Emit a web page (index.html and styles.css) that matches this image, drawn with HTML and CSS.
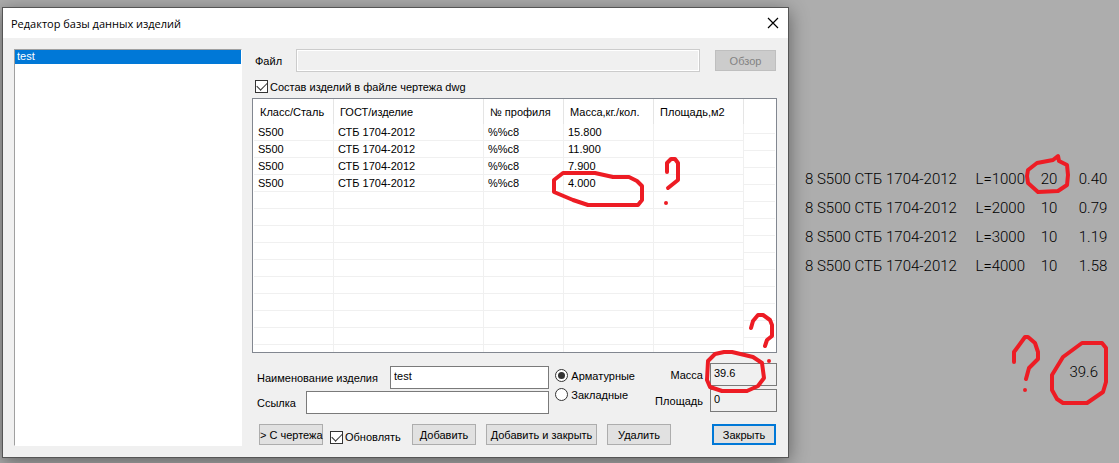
FILE: index.html
```html
<!DOCTYPE html>
<html lang="ru">

<head>
    <meta charset="UTF-8">
    <meta name="viewport" content="width=device-width, initial-scale=1.0">
    <title>Редактор базы данных изделий</title>
    <link rel="stylesheet" href="styles.css">
</head>

<body>
    <form class="dialog">
        <header class="titlebar">
            <h1>Редактор базы данных изделий</h1>
            <button type="button" class="close" aria-label="Закрыть окно">
                <svg width="12" height="12" viewBox="0 0 12 12">
                    <path d="M1 1L11 11M11 1L1 11" stroke="#000" stroke-width="1.2" fill="none" />
                </svg>
            </button>
        </header>

        <div class="content">
            <select class="list" size="20" aria-label="Изделия">
                <option>test</option>
            </select>

            <div class="editor">
                <div class="file-row">
                    <label for="file">Файл</label>
                    <input type="text" id="file" disabled>
                    <button type="button" class="btn" disabled>Обзор</button>
                </div>

                <div class="check-row">
                    <input type="checkbox" id="dwg" checked>
                    <label for="dwg">Состав изделий в файле чертежа dwg</label>
                </div>

                <div class="grid">
                    <table>
                        <colgroup>
                            <col class="c-class">
                            <col class="c-gost">
                            <col class="c-num">
                            <col class="c-mass">
                            <col class="c-area">
                            <col>
                        </colgroup>
                        <thead>
                            <tr><th>Класс/Сталь</th><th>ГОСТ/изделие</th><th>№ профиля</th><th>Масса,кг./кол.</th><th>Площадь,м2</th><th></th></tr>
                        </thead>
                        <tbody>
                            <tr><td>S500</td><td>СТБ 1704-2012</td><td>%%c8</td><td>15.800</td><td></td><td></td></tr>
                            <tr><td>S500</td><td>СТБ 1704-2012</td><td>%%c8</td><td>11.900</td><td></td><td></td></tr>
                            <tr><td>S500</td><td>СТБ 1704-2012</td><td>%%c8</td><td>7.900</td><td></td><td></td></tr>
                            <tr><td>S500</td><td>СТБ 1704-2012</td><td>%%c8</td><td>4.000</td><td></td><td></td></tr>
                            <tr><td></td><td></td><td></td><td></td><td></td><td></td></tr>
                            <tr><td></td><td></td><td></td><td></td><td></td><td></td></tr>
                            <tr><td></td><td></td><td></td><td></td><td></td><td></td></tr>
                            <tr><td></td><td></td><td></td><td></td><td></td><td></td></tr>
                            <tr><td></td><td></td><td></td><td></td><td></td><td></td></tr>
                            <tr><td></td><td></td><td></td><td></td><td></td><td></td></tr>
                            <tr><td></td><td></td><td></td><td></td><td></td><td></td></tr>
                            <tr><td></td><td></td><td></td><td></td><td></td><td></td></tr>
                            <tr><td></td><td></td><td></td><td></td><td></td><td></td></tr>
                            <tr class="last"><td></td><td></td><td></td><td></td><td></td><td></td></tr>
                        </tbody>
                    </table>
                </div>

                <div class="details">
                    <div class="names">
                        <div class="field">
                            <label for="name">Наименование изделия</label>
                            <input type="text" id="name" value="test">
                        </div>
                        <div class="field">
                            <label for="link" class="link-label">Ссылка</label>
                            <input type="text" id="link">
                        </div>
                    </div>
                    <div class="kinds">
                        <div class="kind">
                            <input type="radio" name="kind" id="arm" checked>
                            <label for="arm">Арматурные</label>
                        </div>
                        <div class="kind">
                            <input type="radio" name="kind" id="zak">
                            <label for="zak">Закладные</label>
                        </div>
                    </div>
                    <div class="totals">
                        <label for="mass">Масса</label>
                        <input type="text" id="mass" value="39.6" readonly>
                        <label for="area">Площадь</label>
                        <input type="text" id="area" value="0" readonly>
                    </div>
                </div>

                <div class="buttons">
                    <button type="button" class="btn">&gt; С чертежа</button>
                    <div class="update">
                        <input type="checkbox" id="update" checked>
                        <label for="update">Обновлять</label>
                    </div>
                    <button type="button" class="btn">Добавить</button>
                    <button type="button" class="btn wide">Добавить и закрыть</button>
                    <button type="button" class="btn">Удалить</button>
                    <button type="button" class="btn default">Закрыть</button>
                </div>
            </div>
        </div>
    </form>

    <section class="drawing">
        <table>
            <tr><td>8 S500 СТБ 1704-2012</td><td>L=1000</td><td>20</td><td>0.40</td></tr>
            <tr><td>8 S500 СТБ 1704-2012</td><td>L=2000</td><td>10</td><td>0.79</td></tr>
            <tr><td>8 S500 СТБ 1704-2012</td><td>L=3000</td><td>10</td><td>1.19</td></tr>
            <tr><td>8 S500 СТБ 1704-2012</td><td>L=4000</td><td>10</td><td>1.58</td></tr>
        </table>
        <p class="sum">39.6</p>
    </section>

    <!-- red pencil marks -->
    <svg class="marks" width="1119" height="463" viewBox="0 0 1119 463" aria-hidden="true">
        <path d="M563 173L595 173L613 177L629 177L637 181L642 186V200L638 205H588L573 200L554 192V180Z" />
        <path d="M667 172V163L671 159H675L678 163V180L668 188M666 203V203" />
        <path d="M751 328L753 321L758 315H763L770 320L772 325V336L767 340L765 346M769 361V361" />
        <path d="M708 361L715 354L724 352H732L753 357L762 363L764 378L758 386L747 391H722L710 387L707 380Z" />
        <path d="M1028 170L1037 163L1053 160L1058 156L1059 161L1067 165L1068 175L1067 185L1058 191L1038 192L1028 183L1027 176Z" />
        <path d="M1014 362V352L1025 337H1028L1035 343L1038 352V359L1029 368L1026 379M1025 390V390" />
        <path d="M1052 375L1063 357L1082 343H1102L1106 348V382L1103 392L1087 403H1063L1057 399L1052 390Z" />
    </svg>
</body>

</html>
```

FILE: styles.css
```css
* {
    box-sizing: border-box;
}

body {
    display: flex;
    align-items: flex-start;
    min-height: 100vh;
    margin: 0;
    padding: 7px 0 5px 2px;
    font-family: "Liberation Sans", Arial, sans-serif;
    font-size: 11px;
    color: #000;
    background: #adadad;
}

input,
button,
select {
    font: inherit;
    color: inherit;
    margin: 0;
}

.dialog {
    flex: 1;
    min-width: 700px;
    border: 1px solid #555;
    background: #f0f0f0;
    box-shadow: 0 4px 18px rgba(0, 0, 0, 0.45);
}

.titlebar {
    display: flex;
    align-items: center;
    justify-content: space-between;
    height: 30px;
    padding: 0 9px 0 8px;
    background: #fff;
}

.titlebar h1 {
    margin: 0;
    font: 11px "Open Sans", sans-serif;
}

.close {
    display: flex;
    padding: 0;
    border: none;
    background: none;
}

.content {
    display: flex;
    gap: 10px;
    padding: 11px;
}

.list {
    width: 228px;
    padding: 0;
    border: 1px solid #fff;
    border-top-color: #a0a0a0;
    border-left-color: #a0a0a0;
    border-radius: 0;
    background: #fff;
    outline: none;
    overflow: hidden;
}

.list option {
    height: 14px;
    min-height: 14px;
    padding: 0 2px;
    line-height: 15px;
    color: #fff;
    background: #0078d7;
}

.editor {
    flex: 1;
}

/* text boxes, ticks and radios */
input[type="text"] {
    height: 23px;
    min-width: 0;
    padding: 0 3px 4px;
    border: 1px solid #7a7a7a;
    border-radius: 0;
    background: #fff;
    outline: none;
}

input[type="text"]:disabled {
    border-color: #ccc;
    background: #f0f0f0;
    box-shadow: inset 0 0 0 1px #fff;
}

input[type="text"]:read-only {
    background: #f0f0f0;
}

input[type="checkbox"],
input[type="radio"] {
    appearance: none;
    display: grid;
    place-items: center;
    flex: none;
    width: 13px;
    height: 13px;
    border: 1px solid #333;
    background: #fff;
}

input[type="radio"] {
    border-radius: 50%;
}

input[type="checkbox"]:checked::after {
    content: "";
    width: 9px;
    height: 5px;
    margin-bottom: 3px;
    border: solid #333;
    border-width: 0 0 1px 1px;
    transform: rotate(-45deg);
}

input[type="radio"]:checked::after {
    content: "";
    width: 7px;
    height: 7px;
    border-radius: 50%;
    background: #333;
}

.btn {
    width: 64px;
    height: 21px;
    padding: 0;
    border: 1px solid #adadad;
    border-radius: 0;
    background: #e1e1e1;
    white-space: nowrap;
}

.btn:disabled {
    width: 61px;
    color: #838383;
    border-color: #bfbfbf;
    background: #ccc;
}

.btn.wide {
    width: 111px;
}

.btn.default {
    margin-left: auto;
    border: 2px solid #0078d7;
}

.file-row {
    display: flex;
    align-items: center;
    padding: 0 1px 0 3px;
}

.file-row label {
    width: 41px;
}

.file-row input {
    flex: 1;
    margin-right: 15px;
}

.check-row {
    display: flex;
    align-items: center;
    gap: 2px;
    height: 26px;
    padding: 3px 3px 0;
}

.grid {
    height: 255px;
    padding: 0 1px;
    border: 1px solid #828790;
    background: #fff;
    overflow: hidden;
}

.grid table {
    width: 100%;
    table-layout: fixed;
    border-collapse: separate;
    border-spacing: 0;
}

.c-class {
    width: 80px;
}

.c-gost {
    width: 150px;
}

.c-num {
    width: 80px;
}

.c-mass,
.c-area {
    width: 90px;
}

.grid th {
    height: 25px;
    padding: 1px 0 0 6px;
    border-right: 1px solid #e5e5e5;
    font-weight: normal;
    text-align: left;
    white-space: nowrap;
}

.grid td {
    height: 17px;
    padding: 0 0 0 4px;
    border-right: 1px solid #f0f0f0;
    border-bottom: 1px solid #f0f0f0;
    line-height: 16px;
    white-space: nowrap;
}

.grid th:last-child,
.grid td:last-child {
    border: none;
}

/* the filler column is ruled half a row higher */
.grid td:last-child {
    background: linear-gradient(#f0f0f0, #f0f0f0) 0 9px / 100% 1px no-repeat;
}

.grid .last td {
    border-bottom: none;
}

.details {
    display: flex;
    align-items: flex-start;
    padding-top: 10px;
}

.names {
    flex: 1;
    display: grid;
    gap: 2px;
    padding: 3px 0 0 5px;
}

.field {
    display: flex;
    align-items: center;
}

.field label {
    width: 133px;
}

.field .link-label {
    width: 49px;
}

.field input {
    flex: 1;
}

.kinds {
    display: grid;
    gap: 6px;
    padding: 6px 0 0 6px;
}

.kind {
    display: flex;
    align-items: center;
    gap: 3px;
}

.totals {
    display: grid;
    grid-template-columns: auto 67px;
    align-items: center;
    gap: 3px 7px;
    width: 142px;
    text-align: right;
}

.totals input {
    text-align: left;
}

.buttons {
    display: flex;
    align-items: center;
    padding: 10px 1px 1px 7px;
}

.update {
    display: flex;
    align-items: center;
    gap: 2px;
    width: 82px;
    margin-left: 7px;
    padding-top: 5px;
}

.buttons .btn + .btn:not(.default) {
    margin-left: 10px;
}

/* drawing text beside the dialog */
.drawing {
    width: 330px;
    padding: 157px 0 0 16px;
    font-family: Roboto, "Liberation Sans", sans-serif;
    font-size: 15px;
    font-weight: 300;
}

.drawing table {
    width: 100%;
    table-layout: fixed;
    border-spacing: 0;
}

.drawing td {
    height: 29px;
    padding: 0;
    text-align: center;
    white-space: nowrap;
}

.drawing td:first-child {
    width: 160px;
    text-align: left;
}

.drawing td:nth-child(2) {
    width: 60px;
    text-align: right;
}

.drawing td:nth-child(3) {
    width: 48px;
}

.drawing td:last-child {
    padding-right: 6px;
}

.sum {
    margin: 83px 21px 0 0;
    line-height: 18px;
    text-align: right;
}

.marks {
    position: absolute;
    top: 0;
    left: 0;
    pointer-events: none;
}

.marks path {
    fill: none;
    stroke: #ed1c24;
    stroke-width: 4;
    stroke-linecap: round;
    stroke-linejoin: round;
}
```
